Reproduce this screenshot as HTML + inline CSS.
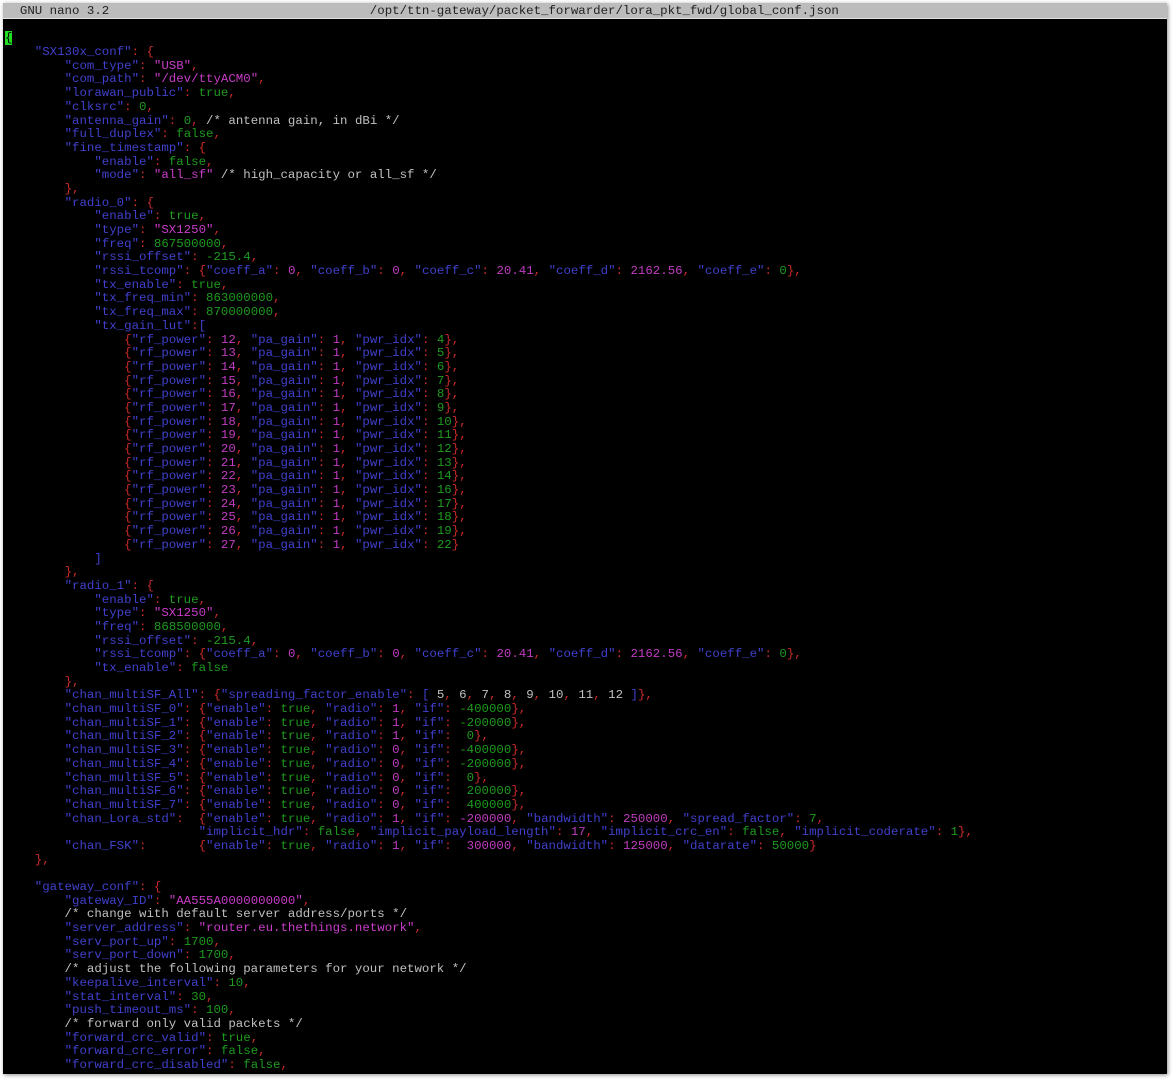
<!DOCTYPE html>
<html><head><meta charset="utf-8"><style>
html,body{margin:0;padding:0;background:#fff;width:1173px;height:1080px;overflow:hidden}
#win{position:absolute;left:3px;top:3px;width:1164px;height:1071px;background:#000;box-shadow:1px 1px 4px rgba(0,0,0,.45);overflow:hidden}
pre{margin:0;position:absolute;left:2px;top:2px;font-family:"Liberation Mono",monospace;font-size:12.42px;line-height:13.68px;color:#c0c0c0;white-space:pre}
#tb{position:absolute;left:0;top:0;width:1164px;height:15px;background:#bcbcbc;border-bottom:1px solid #e0e0e0}
.t{color:#222}
.k{color:#4040cc}.p{color:#cc2a2a}.s{color:#c83cc8}.g{color:#1e9a1e}.m{color:#c03cc0}.w{color:#c8c8c8}
.cur{background:#22dd22;color:#000}
</style></head><body><div id="win"><div id="tb"></div><pre><span class="t">  GNU nano 3.2                                   /opt/ttn-gateway/packet_forwarder/lora_pkt_fwd/global_conf.json</span>

<span class="cur">{</span>
    <span class="k">"SX130x_conf"</span><span class="p">: {</span>
        <span class="k">"com_type"</span><span class="p">: </span><span class="s">"USB"</span><span class="p">,</span>
        <span class="k">"com_path"</span><span class="p">: </span><span class="s">"/dev/ttyACM0"</span><span class="p">,</span>
        <span class="k">"lorawan_public"</span><span class="p">: </span><span class="g">true</span><span class="p">,</span>
        <span class="k">"clksrc"</span><span class="p">: </span><span class="g">0</span><span class="p">,</span>
        <span class="k">"antenna_gain"</span><span class="p">: </span><span class="g">0</span><span class="p">,</span> /* antenna gain, in dBi */
        <span class="k">"full_duplex"</span><span class="p">: </span><span class="g">false</span><span class="p">,</span>
        <span class="k">"fine_timestamp"</span><span class="p">: {</span>
            <span class="k">"enable"</span><span class="p">: </span><span class="g">false</span><span class="p">,</span>
            <span class="k">"mode"</span><span class="p">: </span><span class="s">"all_sf"</span> /* high_capacity or all_sf */
        <span class="p">},</span>
        <span class="k">"radio_0"</span><span class="p">: {</span>
            <span class="k">"enable"</span><span class="p">: </span><span class="g">true</span><span class="p">,</span>
            <span class="k">"type"</span><span class="p">: </span><span class="s">"SX1250"</span><span class="p">,</span>
            <span class="k">"freq"</span><span class="p">: </span><span class="g">867500000</span><span class="p">,</span>
            <span class="k">"rssi_offset"</span><span class="p">: </span><span class="g">-215.4</span><span class="p">,</span>
            <span class="k">"rssi_tcomp"</span><span class="p">: {</span><span class="k">"coeff_a"</span><span class="p">: </span><span class="m">0</span><span class="p">, </span><span class="k">"coeff_b"</span><span class="p">: </span><span class="m">0</span><span class="p">, </span><span class="k">"coeff_c"</span><span class="p">: </span><span class="m">20.41</span><span class="p">, </span><span class="k">"coeff_d"</span><span class="p">: </span><span class="m">2162.56</span><span class="p">, </span><span class="k">"coeff_e"</span><span class="p">: </span><span class="g">0</span><span class="p">},</span>
            <span class="k">"tx_enable"</span><span class="p">: </span><span class="g">true</span><span class="p">,</span>
            <span class="k">"tx_freq_min"</span><span class="p">: </span><span class="g">863000000</span><span class="p">,</span>
            <span class="k">"tx_freq_max"</span><span class="p">: </span><span class="g">870000000</span><span class="p">,</span>
            <span class="k">"tx_gain_lut"</span><span class="p">:</span><span class="k">[</span>
                <span class="p">{</span><span class="k">"rf_power"</span><span class="p">: </span><span class="m">12</span><span class="p">, </span><span class="k">"pa_gain"</span><span class="p">: </span><span class="m">1</span><span class="p">, </span><span class="k">"pwr_idx"</span><span class="p">: </span><span class="g">4</span><span class="p">},</span>
                <span class="p">{</span><span class="k">"rf_power"</span><span class="p">: </span><span class="m">13</span><span class="p">, </span><span class="k">"pa_gain"</span><span class="p">: </span><span class="m">1</span><span class="p">, </span><span class="k">"pwr_idx"</span><span class="p">: </span><span class="g">5</span><span class="p">},</span>
                <span class="p">{</span><span class="k">"rf_power"</span><span class="p">: </span><span class="m">14</span><span class="p">, </span><span class="k">"pa_gain"</span><span class="p">: </span><span class="m">1</span><span class="p">, </span><span class="k">"pwr_idx"</span><span class="p">: </span><span class="g">6</span><span class="p">},</span>
                <span class="p">{</span><span class="k">"rf_power"</span><span class="p">: </span><span class="m">15</span><span class="p">, </span><span class="k">"pa_gain"</span><span class="p">: </span><span class="m">1</span><span class="p">, </span><span class="k">"pwr_idx"</span><span class="p">: </span><span class="g">7</span><span class="p">},</span>
                <span class="p">{</span><span class="k">"rf_power"</span><span class="p">: </span><span class="m">16</span><span class="p">, </span><span class="k">"pa_gain"</span><span class="p">: </span><span class="m">1</span><span class="p">, </span><span class="k">"pwr_idx"</span><span class="p">: </span><span class="g">8</span><span class="p">},</span>
                <span class="p">{</span><span class="k">"rf_power"</span><span class="p">: </span><span class="m">17</span><span class="p">, </span><span class="k">"pa_gain"</span><span class="p">: </span><span class="m">1</span><span class="p">, </span><span class="k">"pwr_idx"</span><span class="p">: </span><span class="g">9</span><span class="p">},</span>
                <span class="p">{</span><span class="k">"rf_power"</span><span class="p">: </span><span class="m">18</span><span class="p">, </span><span class="k">"pa_gain"</span><span class="p">: </span><span class="m">1</span><span class="p">, </span><span class="k">"pwr_idx"</span><span class="p">: </span><span class="g">10</span><span class="p">},</span>
                <span class="p">{</span><span class="k">"rf_power"</span><span class="p">: </span><span class="m">19</span><span class="p">, </span><span class="k">"pa_gain"</span><span class="p">: </span><span class="m">1</span><span class="p">, </span><span class="k">"pwr_idx"</span><span class="p">: </span><span class="g">11</span><span class="p">},</span>
                <span class="p">{</span><span class="k">"rf_power"</span><span class="p">: </span><span class="m">20</span><span class="p">, </span><span class="k">"pa_gain"</span><span class="p">: </span><span class="m">1</span><span class="p">, </span><span class="k">"pwr_idx"</span><span class="p">: </span><span class="g">12</span><span class="p">},</span>
                <span class="p">{</span><span class="k">"rf_power"</span><span class="p">: </span><span class="m">21</span><span class="p">, </span><span class="k">"pa_gain"</span><span class="p">: </span><span class="m">1</span><span class="p">, </span><span class="k">"pwr_idx"</span><span class="p">: </span><span class="g">13</span><span class="p">},</span>
                <span class="p">{</span><span class="k">"rf_power"</span><span class="p">: </span><span class="m">22</span><span class="p">, </span><span class="k">"pa_gain"</span><span class="p">: </span><span class="m">1</span><span class="p">, </span><span class="k">"pwr_idx"</span><span class="p">: </span><span class="g">14</span><span class="p">},</span>
                <span class="p">{</span><span class="k">"rf_power"</span><span class="p">: </span><span class="m">23</span><span class="p">, </span><span class="k">"pa_gain"</span><span class="p">: </span><span class="m">1</span><span class="p">, </span><span class="k">"pwr_idx"</span><span class="p">: </span><span class="g">16</span><span class="p">},</span>
                <span class="p">{</span><span class="k">"rf_power"</span><span class="p">: </span><span class="m">24</span><span class="p">, </span><span class="k">"pa_gain"</span><span class="p">: </span><span class="m">1</span><span class="p">, </span><span class="k">"pwr_idx"</span><span class="p">: </span><span class="g">17</span><span class="p">},</span>
                <span class="p">{</span><span class="k">"rf_power"</span><span class="p">: </span><span class="m">25</span><span class="p">, </span><span class="k">"pa_gain"</span><span class="p">: </span><span class="m">1</span><span class="p">, </span><span class="k">"pwr_idx"</span><span class="p">: </span><span class="g">18</span><span class="p">},</span>
                <span class="p">{</span><span class="k">"rf_power"</span><span class="p">: </span><span class="m">26</span><span class="p">, </span><span class="k">"pa_gain"</span><span class="p">: </span><span class="m">1</span><span class="p">, </span><span class="k">"pwr_idx"</span><span class="p">: </span><span class="g">19</span><span class="p">},</span>
                <span class="p">{</span><span class="k">"rf_power"</span><span class="p">: </span><span class="m">27</span><span class="p">, </span><span class="k">"pa_gain"</span><span class="p">: </span><span class="m">1</span><span class="p">, </span><span class="k">"pwr_idx"</span><span class="p">: </span><span class="g">22</span><span class="p">}</span>
            <span class="k">]</span>
        <span class="p">},</span>
        <span class="k">"radio_1"</span><span class="p">: {</span>
            <span class="k">"enable"</span><span class="p">: </span><span class="g">true</span><span class="p">,</span>
            <span class="k">"type"</span><span class="p">: </span><span class="s">"SX1250"</span><span class="p">,</span>
            <span class="k">"freq"</span><span class="p">: </span><span class="g">868500000</span><span class="p">,</span>
            <span class="k">"rssi_offset"</span><span class="p">: </span><span class="g">-215.4</span><span class="p">,</span>
            <span class="k">"rssi_tcomp"</span><span class="p">: {</span><span class="k">"coeff_a"</span><span class="p">: </span><span class="m">0</span><span class="p">, </span><span class="k">"coeff_b"</span><span class="p">: </span><span class="m">0</span><span class="p">, </span><span class="k">"coeff_c"</span><span class="p">: </span><span class="m">20.41</span><span class="p">, </span><span class="k">"coeff_d"</span><span class="p">: </span><span class="m">2162.56</span><span class="p">, </span><span class="k">"coeff_e"</span><span class="p">: </span><span class="g">0</span><span class="p">},</span>
            <span class="k">"tx_enable"</span><span class="p">: </span><span class="g">false</span>
        <span class="p">},</span>
        <span class="k">"chan_multiSF_All"</span><span class="p">: {</span><span class="k">"spreading_factor_enable"</span><span class="p">: </span><span class="k">[</span> 5<span class="p">,</span> 6<span class="p">,</span> 7<span class="p">,</span> 8<span class="p">,</span> 9<span class="p">,</span> 10<span class="p">,</span> 11<span class="p">,</span> 12 <span class="k">]</span><span class="p">},</span>
        <span class="k">"chan_multiSF_0"</span><span class="p">: {</span><span class="k">"enable"</span><span class="p">: </span><span class="g">true</span><span class="p">, </span><span class="k">"radio"</span><span class="p">: </span><span class="m">1</span><span class="p">, </span><span class="k">"if"</span><span class="p">: </span><span class="g">-400000</span><span class="p">},</span>
        <span class="k">"chan_multiSF_1"</span><span class="p">: {</span><span class="k">"enable"</span><span class="p">: </span><span class="g">true</span><span class="p">, </span><span class="k">"radio"</span><span class="p">: </span><span class="m">1</span><span class="p">, </span><span class="k">"if"</span><span class="p">: </span><span class="g">-200000</span><span class="p">},</span>
        <span class="k">"chan_multiSF_2"</span><span class="p">: {</span><span class="k">"enable"</span><span class="p">: </span><span class="g">true</span><span class="p">, </span><span class="k">"radio"</span><span class="p">: </span><span class="m">1</span><span class="p">, </span><span class="k">"if"</span><span class="p">:  </span><span class="g">0</span><span class="p">},</span>
        <span class="k">"chan_multiSF_3"</span><span class="p">: {</span><span class="k">"enable"</span><span class="p">: </span><span class="g">true</span><span class="p">, </span><span class="k">"radio"</span><span class="p">: </span><span class="m">0</span><span class="p">, </span><span class="k">"if"</span><span class="p">: </span><span class="g">-400000</span><span class="p">},</span>
        <span class="k">"chan_multiSF_4"</span><span class="p">: {</span><span class="k">"enable"</span><span class="p">: </span><span class="g">true</span><span class="p">, </span><span class="k">"radio"</span><span class="p">: </span><span class="m">0</span><span class="p">, </span><span class="k">"if"</span><span class="p">: </span><span class="g">-200000</span><span class="p">},</span>
        <span class="k">"chan_multiSF_5"</span><span class="p">: {</span><span class="k">"enable"</span><span class="p">: </span><span class="g">true</span><span class="p">, </span><span class="k">"radio"</span><span class="p">: </span><span class="m">0</span><span class="p">, </span><span class="k">"if"</span><span class="p">:  </span><span class="g">0</span><span class="p">},</span>
        <span class="k">"chan_multiSF_6"</span><span class="p">: {</span><span class="k">"enable"</span><span class="p">: </span><span class="g">true</span><span class="p">, </span><span class="k">"radio"</span><span class="p">: </span><span class="m">0</span><span class="p">, </span><span class="k">"if"</span><span class="p">:  </span><span class="g">200000</span><span class="p">},</span>
        <span class="k">"chan_multiSF_7"</span><span class="p">: {</span><span class="k">"enable"</span><span class="p">: </span><span class="g">true</span><span class="p">, </span><span class="k">"radio"</span><span class="p">: </span><span class="m">0</span><span class="p">, </span><span class="k">"if"</span><span class="p">:  </span><span class="g">400000</span><span class="p">},</span>
        <span class="k">"chan_Lora_std"</span><span class="p">:  {</span><span class="k">"enable"</span><span class="p">: </span><span class="g">true</span><span class="p">, </span><span class="k">"radio"</span><span class="p">: </span><span class="m">1</span><span class="p">, </span><span class="k">"if"</span><span class="p">: </span><span class="m">-200000</span><span class="p">, </span><span class="k">"bandwidth"</span><span class="p">: </span><span class="m">250000</span><span class="p">, </span><span class="k">"spread_factor"</span><span class="p">: </span><span class="g">7</span><span class="p">,</span>
                          <span class="k">"implicit_hdr"</span><span class="p">: </span><span class="g">false</span><span class="p">, </span><span class="k">"implicit_payload_length"</span><span class="p">: </span><span class="m">17</span><span class="p">, </span><span class="k">"implicit_crc_en"</span><span class="p">: </span><span class="g">false</span><span class="p">, </span><span class="k">"implicit_coderate"</span><span class="p">: </span><span class="g">1</span><span class="p">},</span>
        <span class="k">"chan_FSK"</span><span class="p">:       {</span><span class="k">"enable"</span><span class="p">: </span><span class="g">true</span><span class="p">, </span><span class="k">"radio"</span><span class="p">: </span><span class="m">1</span><span class="p">, </span><span class="k">"if"</span><span class="p">:  </span><span class="m">300000</span><span class="p">, </span><span class="k">"bandwidth"</span><span class="p">: </span><span class="m">125000</span><span class="p">, </span><span class="k">"datarate"</span><span class="p">: </span><span class="g">50000</span><span class="p">}</span>
    <span class="p">},</span>

    <span class="k">"gateway_conf"</span><span class="p">: {</span>
        <span class="k">"gateway_ID"</span><span class="p">: </span><span class="s">"AA555A0000000000"</span><span class="p">,</span>
        /* change with default server address/ports */
        <span class="k">"server_address"</span><span class="p">: </span><span class="s">"router.eu.thethings.network"</span><span class="p">,</span>
        <span class="k">"serv_port_up"</span><span class="p">: </span><span class="g">1700</span><span class="p">,</span>
        <span class="k">"serv_port_down"</span><span class="p">: </span><span class="g">1700</span><span class="p">,</span>
        /* adjust the following parameters for your network */
        <span class="k">"keepalive_interval"</span><span class="p">: </span><span class="g">10</span><span class="p">,</span>
        <span class="k">"stat_interval"</span><span class="p">: </span><span class="g">30</span><span class="p">,</span>
        <span class="k">"push_timeout_ms"</span><span class="p">: </span><span class="g">100</span><span class="p">,</span>
        /* forward only valid packets */
        <span class="k">"forward_crc_valid"</span><span class="p">: </span><span class="g">true</span><span class="p">,</span>
        <span class="k">"forward_crc_error"</span><span class="p">: </span><span class="g">false</span><span class="p">,</span>
        <span class="k">"forward_crc_disabled"</span><span class="p">: </span><span class="g">false</span><span class="p">,</span>
</pre></div></body></html>
